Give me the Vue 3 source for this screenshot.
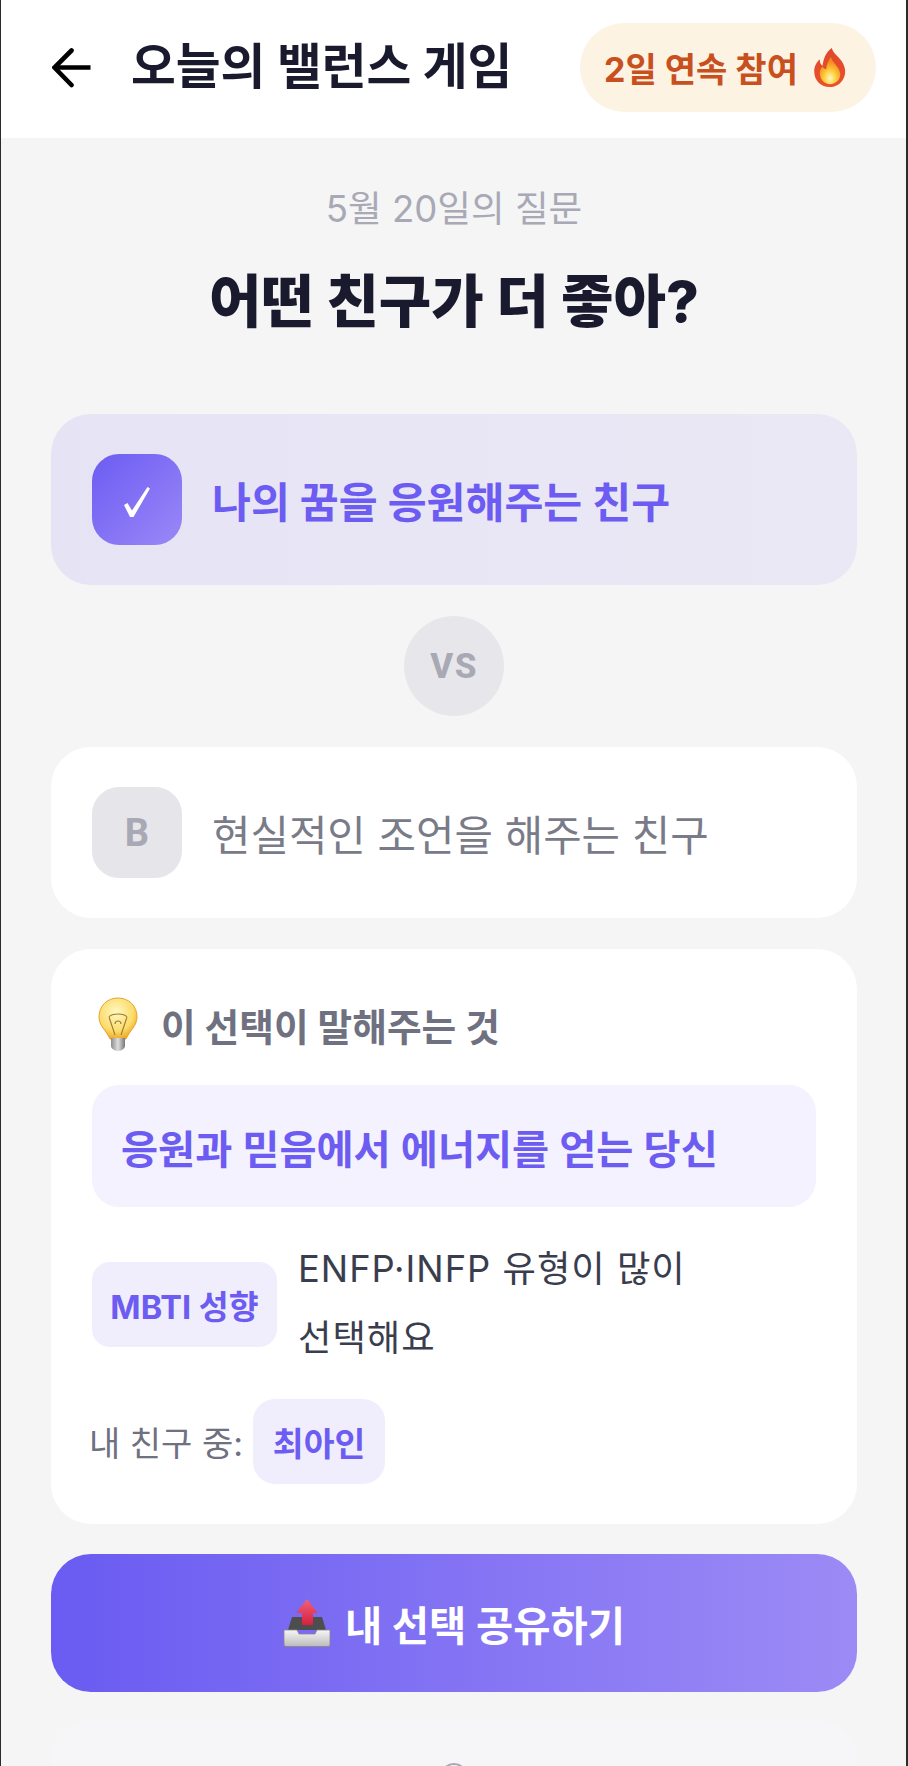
<script setup>
</script>

<template>
  <div class="page">
    <header class="bar">
      <svg class="back" viewBox="0 0 40 40" fill="none" stroke="#000" stroke-width="4.6" stroke-linecap="round">
        <path d="M38.500 19.500H3" stroke-linecap="butt" />
        <path d="M19.500 2.500 2.500 19.500 19.500 37" />
      </svg>
      <h1 class="bar-title">오늘의 밸런스 게임</h1>
      <div class="streak">
        <span>2일 연속 참여</span>
        <svg class="flame" viewBox="0 0 36 42">
          <defs>
            <linearGradient id="fl" x1="0" y1="0" x2="0" y2="1">
              <stop offset="0" stop-color="#e0482a" />
              <stop offset="1" stop-color="#e9502c" />
            </linearGradient>
            <radialGradient id="fi" cx="0.5" cy="0.78" r="0.62">
              <stop offset="0" stop-color="#fff4c8" />
              <stop offset="0.45" stop-color="#fdd23d" />
              <stop offset="1" stop-color="#f58a20" />
            </radialGradient>
          </defs>
          <path fill="url(#fl)" d="M20 0c1 7 12 11 14 22 2 11-6 20-16 20S1 35 1 25c0-6 3-10 6-13 0 4 1 6 3 7 1-7 3-14 10-19z" />
          <path fill="url(#fi)" d="M19 10c1 5 9 10 10 17 1 7-5 12-11 12S7 34 7 27c0-3 1-5 3-7 1 2 2 3 4 3 0-5 2-9 5-13z" />
        </svg>
      </div>
    </header>

    <main class="main">
      <p class="date">5월 20일의 질문</p>
      <h2 class="question">어떤 친구가 더 좋아?</h2>

      <div class="option option-picked">
        <div class="mark mark-picked">
          <svg class="check" viewBox="0 0 26 30">
            <path fill="#fff" d="M0 18 3.500 16 8 23.500 23.500 0 26 1.500 9.500 30H6z" />
          </svg>
        </div>
        <span class="option-text picked-text">나의 꿈을 응원해주는 친구</span>
      </div>

      <div class="vs">VS</div>

      <div class="option">
        <div class="mark">B</div>
        <span class="option-text plain-text">현실적인 조언을 해주는 친구</span>
      </div>

      <section class="card">
        <div class="card-head">
          <svg class="bulb" viewBox="0 0 40 54">
            <defs>
              <radialGradient id="bg" cx="0.45" cy="0.35" r="0.65">
                <stop offset="0" stop-color="#fff8c4" />
                <stop offset="0.7" stop-color="#fcdc6a" />
                <stop offset="1" stop-color="#eea92b" />
              </radialGradient>
              <linearGradient id="bb" x1="0" y1="0" x2="1" y2="0">
                <stop offset="0" stop-color="#8d8d8d" />
                <stop offset="0.5" stop-color="#dedede" />
                <stop offset="1" stop-color="#777" />
              </linearGradient>
            </defs>
            <path fill="url(#bg)" stroke="#e6a52e" stroke-width="1" d="M20 1C9 1 1 9 1 20c0 9 7 13 11 22h16c4-9 11-13 11-22C39 9 31 1 20 1z" />
            <path fill="none" stroke="#9a7a34" stroke-width="1.100" d="M11 20l6 18M29 20l-6 18M11 20c3-4 15-4 18 0M17 27a3 3 0 1 1 6 0" />
            <path fill="url(#bb)" d="M13 41h14v8c0 2-3 5-7 5s-7-3-7-5z" />
          </svg>
          <span class="card-title">이 선택이 말해주는 것</span>
        </div>

        <div class="headline">응원과 믿음에서 에너지를 얻는 당신</div>

        <div class="mbti">
          <span class="chip chip-mbti">MBTI 성향</span>
          <p class="mbti-text">ENFP·INFP 유형이 많이 선택해요</p>
        </div>

        <div class="friends">
          <span class="friends-label">내 친구 중:</span>
          <span class="chip chip-name">최아인</span>
        </div>
      </section>

      <button class="share">
        <svg class="tray" viewBox="0 0 48 48">
          <defs>
            <linearGradient id="ta" x1="0" y1="0" x2="0" y2="1">
              <stop offset="0" stop-color="#f0627a" />
              <stop offset="1" stop-color="#d5203f" />
            </linearGradient>
            <linearGradient id="tb" x1="0" y1="0" x2="0" y2="1">
              <stop offset="0" stop-color="#f7f7f7" />
              <stop offset="1" stop-color="#bdbaba" />
            </linearGradient>
          </defs>
          <path fill="#4d4d4d" d="M5 31 9 18H39L43 31z" />
          <path fill="url(#ta)" d="M24 0 35 14H30V26H19V14H13z" />
          <path fill="url(#tb)" stroke="#8a8585" stroke-width=".8" d="M1 31H14L16 35H32L34 31H47V45C47 47 46 47.500 45 47.500H3C2 47.500 1 47 1 45z" />
        </svg>
        <span>내 선택 공유하기</span>
      </button>

      <div class="foot">
        <div class="peek"></div>
      </div>
    </main>
  </div>
</template>

<style>
html, body { margin: 0; padding: 0; background: #f5f5f6; }
</style>

<style scoped>
.page {
  width: 908px;
  height: 1766px;
  overflow: hidden;
  box-sizing: border-box;
  border-left: 1px solid #2b2b2b;
  border-right: 2px solid #2b2b2b;
  background: #f5f5f6;
  font-family: Inter, "Noto Sans CJK KR", sans-serif;
}
.bar {
  height: 138px;
  box-sizing: border-box;
  background: #fff;
  display: flex;
  align-items: center;
  padding: 0 30px 3px 51px;
}
.back { width: 40px; height: 40px; flex: none; }
.bar-title {
  margin: 0 0 0 39px;
  font-size: 48.700px;
  font-weight: 700;
  line-height: 1;
  color: #1a1a2e;
  flex: 1;
  white-space: nowrap;
}
.streak {
  width: 296px;
  height: 89px;
  flex: none;
  box-sizing: border-box;
  padding-left: 24px;
  border-radius: 45px;
  background: #fdf3e3;
  color: #c8501e;
  font-size: 34px;
  font-weight: 700;
  white-space: nowrap;
  display: flex;
  align-items: center;
  gap: 15px;
}
.flame { width: 34px; height: 39px; flex: none; }
.main {
  padding: 0 49px 0 50px;
  display: flex;
  flex-direction: column;
}
.date {
  margin: 47px 0 0;
  text-align: center;
  font-size: 36.600px;
  line-height: 48px;
  color: #a8a9b5;
}
.question {
  margin: 32px 0 0;
  text-align: center;
  font-size: 57px;
  line-height: 74px;
  font-weight: 800;
  color: #1a1a2e;
}
.option {
  height: 171px;
  box-sizing: border-box;
  border-radius: 40px;
  background: #fff;
  display: flex;
  align-items: center;
  padding: 0 41px;
  gap: 30px;
}
.option-picked {
  margin-top: 75px;
  background: linear-gradient(90deg, #e6e3f5, #ebe8f5);
}
.mark {
  width: 90px;
  height: 91px;
  flex: none;
  border-radius: 27px;
  background: #e5e5ea;
  color: #a8a9b5;
  font-family: Roboto, sans-serif;
  font-size: 38px;
  font-weight: 700;
  display: flex;
  align-items: center;
  justify-content: center;
}
.mark-picked {
  background: linear-gradient(135deg, #6c5cf2, #9a88f7);
}
.check { width: 26px; height: 30px; margin-top: 4px; }
.option-text {
  font-size: 42.300px;
  color: #7a7b88;
  white-space: nowrap;
}
.plain-text { font-size: 41.800px; }
.picked-text { color: #6c5cf2; font-weight: 700; }
.vs {
  width: 100px;
  height: 100px;
  margin: 31px auto;
  border-radius: 50%;
  background: #e7e7eb;
  color: #a8a9b5;
  font-family: Roboto, sans-serif;
  font-size: 35px;
  font-weight: 800;
  letter-spacing: 1.500px;
  display: flex;
  align-items: center;
  justify-content: center;
}
.card {
  margin-top: 31px;
  height: 575px;
  box-sizing: border-box;
  padding: 48px 41px 0;
  border-radius: 40px;
  background: #fff;
}
.card-head { display: flex; align-items: center; height: 54px; padding-left: 6px; gap: 23px; }
.bulb { width: 40px; height: 54px; flex: none; }
.card-title { font-size: 37.700px; font-weight: 700; color: #6f7080; }
.headline {
  margin-top: 34px;
  height: 122px;
  box-sizing: border-box;
  padding: 0 29px;
  border-radius: 27px;
  background: #f4f2fe;
  color: #6c5cf2;
  font-size: 40.300px;
  font-weight: 600;
  display: flex;
  align-items: center;
}
.mbti { display: flex; align-items: center; gap: 21px; margin-top: 28px; }
.chip {
  background: #f0eefc;
  color: #6c5cf2;
  font-weight: 700;
  font-size: 32.500px;
  display: flex;
  align-items: center;
  justify-content: center;
  border-radius: 18px;
  flex: none;
}
.chip-mbti { width: 185px; height: 85px; }
.mbti-text {
  margin: 0;
  width: 420px;
  font-size: 36.300px;
  letter-spacing: 1px;
  line-height: 69px;
  color: #3a3d4d;
  word-break: keep-all;
}
.friends { display: flex; align-items: center; gap: 10px; margin-top: 26px; }
.friends-label { font-size: 34px; margin-left: -3px; color: #6f7080; }
.chip-name { width: 132px; height: 85px; border-radius: 22px; font-size: 33.500px; }
.share {
  margin-top: 30px;
  height: 138px;
  flex: none;
  border: 0;
  border-radius: 40px;
  background: linear-gradient(90deg, #6a5bf2, #9c8bf5);
  color: #fff;
  font: inherit;
  font-size: 40.500px;
  font-weight: 700;
  display: flex;
  align-items: center;
  justify-content: center;
  gap: 14px;
}
.tray { width: 48px; height: 48px; flex: none; }
.foot {
  margin-top: 28px;
  padding-top: 43px;
  border-radius: 40px 40px 0 0;
  background: #f6f6f8;
}
.peek {
  width: 28px;
  height: 28px;
  margin: 0 auto;
  box-sizing: border-box;
  border: 2px solid #a8a9b5;
  border-radius: 50%;
}
</style>
